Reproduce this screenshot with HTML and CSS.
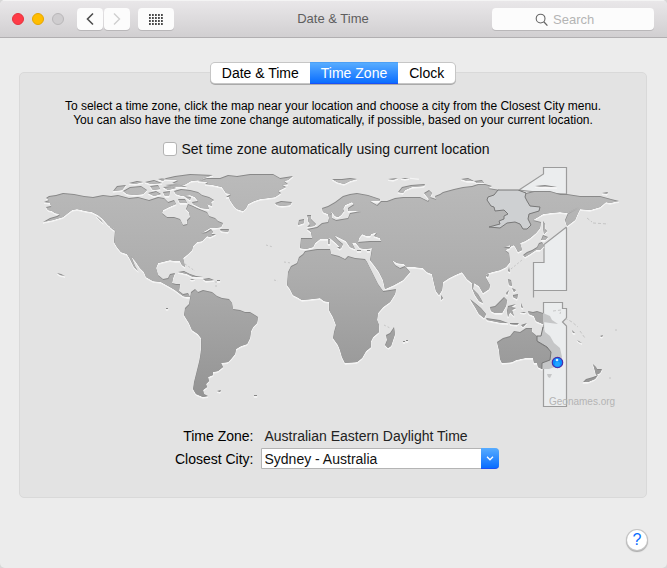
FILE: index.html
```html
<!DOCTYPE html>
<html lang="en">
<head>
<meta charset="utf-8">
<title>Date &amp; Time</title>
<link rel="stylesheet" href="styles.css">
</head>
<body>
<div class="window">
  <header class="titlebar">
    <div class="controls">
      <div class="lights">
        <button class="light close" aria-label="Close"></button>
        <button class="light minimize" aria-label="Minimize"></button>
        <button class="light zoom" aria-label="Zoom" disabled></button>
      </div>
      <div class="history">
        <button class="tool" aria-label="Back"><svg width="8" height="14" viewBox="0 0 8 14"><path d="M7 1.5 1.5 7 7 12.5" fill="none" stroke="#4d4d4d" stroke-width="1.6"/></svg></button>
        <button class="tool" aria-label="Forward" disabled><svg width="8" height="14" viewBox="0 0 8 14"><path d="M1 1.5 6.5 7 1 12.5" fill="none" stroke="#cfcfcf" stroke-width="1.4"/></svg></button>
      </div>
      <button class="tool wide" aria-label="Show all"><svg width="14" height="11" viewBox="0 0 14 11"><path d="M0 1h14M0 4h14M0 7h14M0 10h14" stroke="#111" stroke-width="1.700" stroke-dasharray="1.800 1.200"/></svg></button>
    </div>
    <h1>Date &amp; Time</h1>
    <div class="search">
      <svg width="14" height="14" viewBox="0 0 14 14" aria-hidden="true"><circle cx="5.6" cy="5.6" r="4.4" fill="none" stroke="#666" stroke-width="1.1"/><path d="m8.8 8.8 3.6 3.8" stroke="#666" stroke-width="1.3"/></svg>
      <input type="search" placeholder="Search" aria-label="Search">
    </div>
  </header>

  <main>
    <section class="panel">
      <nav class="tabs">
        <button>Date &amp; Time</button>
        <button class="active" aria-current="page">Time Zone</button>
        <button>Clock</button>
      </nav>
      <p class="hint">To select a time zone, click the map near your location and choose a city from the Closest City menu.<br>You can also have the time zone change automatically, if possible, based on your current location.</p>
      <label class="auto"><input type="checkbox"> Set time zone automatically using current location</label>

      <svg class="map" viewBox="40 162 586 250" role="img" aria-label="World map">
        <defs>
          <linearGradient id="shade" gradientUnits="userSpaceOnUse" x1="0" y1="170" x2="0" y2="400">
            <stop offset="0" stop-color="#bbb"/><stop offset=".45" stop-color="#adadad"/><stop offset="1" stop-color="#939393"/>
          </linearGradient>
          <path id="land" fill-rule="evenodd" d="
            M46 198 49 196 56 195 63 193 74 194 84 196 93 197 103 195 111 196 118 195 129 198 138 197 149 200 158 197 164 198 168 202 174 200 176 204 169 207 163 210 162 213 167 217 174 217 180 219 183 225 187 224 187 220 190 217 189 212 186 209 188 204 193 206 197 208 202 210 207 212 209 216 215 218 218 221 223 223 221 227 215 228 210 228 205 231 201 233 206 232 211 229 213 232 211 234 216 234 210 237 207 236 202 241 197 242 193 246 192 250 188 254 183 258 184 262 185 267 182 265 180 261 175 261 170 260 162 262 158 263 156 268 158 275 163 279 168 278 170 274 175 273 173 278 172 283 176 284 180 284 179 291 183 294 188 293 190 297 187 297 183 296 175 290 170 287 161 282 153 281 146 277 144 272 140 268 136 262 131 256 135 266 138 271 134 267 130 259 127 254 121 252 117 247 114 242 115 230 108 225 103 219 98 215 92 212 86 211 77 209 72 210 68 213 63 217 53 220 43 222 50 218 57 216 60 214 55 213 52 211 48 210 46 207 51 206 50 203 44 202 49 200Z
            M103 223 99 219 96 216 101 220ZM115 231 110 227 113 227Z
            M198 181 206 178 220 178 228 175 237 176 250 174 273 174 280 178 293 176 288 180 284 181 288 184 282 185 286 187 278 191 281 193 275 197 268 198 260 199 254 201 248 204 246 208 243 211 237 209 234 206 230 200 229 197 226 197 231 194 226 193 224 190 222 187 213 185 205 184 208 182Z
            M174 191 181 189 190 190 198 192 202 195 209 197 214 200 211 202 212 206 207 204 209 209 201 208 193 204 192 202 198 201 195 197 190 195 182 196 176 194Z
            M162 179 175 176 190 174 213 175 204 178 200 180 191 181 184 185 172 183 178 180Z
            M113 191 117 186 126 185 122 190ZM123 191 130 187 141 186 147 190 143 194 134 195 127 194ZM150 186 158 185 160 189 153 190ZM148 193 156 191 161 194 154 196ZM163 187 171 186 176 188 168 190ZM163 192 170 191 169 196 165 196ZM129 183 137 181 143 182 135 184ZM145 182 154 180 162 183 151 184ZM158 179 166 178 163 181ZM165 185 178 184 187 187 176 187ZM178 199 185 199 187 203 180 203ZM184 196 191 197 190 200ZM220 229 229 229 228 232 221 231Z
            M178 272 184 271 190 274 196 276 203 277 193 277 187 274ZM203 279 209 278 214 280 206 281ZM190 279 195 279 192 280ZM217 280h3v1h-3Z
            M275 203 281 201 292 202 290 205 282 206 277 205Z
            M191 292 195 289 198 292 203 290 212 292 217 296 222 298 229 299 232 303 233 309 240 310 245 312 250 312 255 315 258 317 257 323 253 327 251 331 250 338 247 344 241 346 236 349 235 354 231 359 228 362 221 363 223 367 218 371 213 372 213 375 208 377 209 381 206 384 207 387 203 390 204 394 208 396 203 397 196 394 193 389 194 382 197 370 199 362 200 357 201 350 201 338 198 334 192 330 189 323 184 315 185 308 189 304 190 298Z
            M217 391 221 390 220 392ZM254 395h3v1h-3ZM57 273 61 274 65 276 60 275ZM166 308h2v1h-2Z
            M300 248 301 238 312 238 311 232 307 229 317 227 322 223 328 222 329 218 328 214 332 213 332 218 336 220 342 219 348 218 350 213 361 211 348 211 348 208 354 204 352 202 345 205 343 209 344 211 341 215 338 217 335 216 332 212 328 214 323 212 322 208 328 206 335 202 343 196 350 194 357 193 368 195 380 199 380 201 370 201 377 205 381 201 387 201 395 198 403 197 409 197 420 197 428 201 429 199 424 193 429 190 432 193 430 197 436 199 435 196 440 194 443 192 454 189 463 187 472 186 478 184 485 184 492 186 488 188 500 190 518 190 526 193 534 191 550 191 560 194 567 194 580 196 588 196 600 196 611 199 619 201 614 202 610 203 606 202 600 207 590 210 580 209 578 213 575 220 567 226 565 220 568 213 579 207 567 213 560 212 550 213 543 214 538 217 533 220 541 222 540 228 536 233 530 238 525 241 520 243 522 250 518 252 516 248 514 245 509 247 503 247 510 244 510 248 505 250 509 253 510 262 506 267 500 270 492 272 486 274 486 278 490 285 489 289 483 293 479 286 474 283 473 289 478 294 481 299 483 303 479 301 475 295 472 288 472 283 467 279 465 276 462 272 455 275 449 278 443 282 442 290 439 295 436 291 434 283 432 274 427 272 423 268 415 267 407 267 404 264 397 263 392 260 395 265 400 268 405 266 410 272 403 280 394 285 385 289 383 280 379 272 374 265 370 260 372 248 365 249 360 248 356 243 352 243 355 249 350 247 346 241 338 237 334 235 338 240 343 244 341 248 336 243 330 238 327 239 320 239 315 243 313 247 306 249Z
            M358 242 370 241 381 241 380 238 374 236 377 232 371 234 370 236 367 236 362 234 359 238Z
            M305 251 311 250 317 249 330 249 331 254 339 256 345 259 348 256 355 258 365 259 367 262 370 268 374 276 378 284 383 291 390 290 396 289 395 294 390 302 383 307 378 313 377 320 379 325 379 332 373 337 371 341 371 347 366 351 362 358 357 362 345 363 342 357 340 350 338 345 333 338 334 332 336 325 333 317 329 310 329 302 324 301 320 298 312 299 302 300 297 297 293 295 290 289 287 285 288 272 291 266 297 263 299 257 303 254Z
            M394 327 390 333 386 335 387 340 385 345 388 348 391 346 395 334Z
            M307 215 311 215 311 219 314 222 316 224 314 226 307 227 310 224 308 221 308 218ZM299 220 304 219 304 223 298 225ZM328 239h2v5h-2ZM337 247 341 247 340 249ZM357 250h4v1h-4ZM367 250h3v1h-3Z
            M332 179 342 179 350 178 357 179 350 181 344 184 337 182ZM398 192 402 187 411 185 425 184 424 186 412 187 405 190 403 193ZM388 179 398 178 393 180ZM401 178 409 178 405 179ZM410 177 419 178ZM461 179 468 178 474 181 467 181ZM474 181 482 180 484 183 477 183ZM535 186 545 185 557 187 542 187ZM602 193 608 192 607 194Z
            M542 242 544 246 540 250 536 250 530 254 525 257 523 255 527 252 532 250 537 247 539 243ZM541 240 543 235 548 237 545 240ZM543 221 545 224 545 229 547 231 544 234 543 228ZM509 267 510 272 508 271ZM485 275 489 274 488 277ZM441 295 443 298 441 300Z
            M508 279 511 280 512 286 509 285ZM512 288 516 290 514 292ZM513 295 518 294 517 299 513 297ZM506 293 509 290 507 295Z
            M470 299 475 303 481 308 486 314 484 318 479 314 475 307ZM486 318 493 319 500 320 508 323 502 323 487 320ZM510 323 519 323 517 325 510 324ZM521 325 527 323 523 327Z
            M490 307 495 306 500 301 504 297 507 300 506 306 502 313 495 313 491 311ZM508 306 516 304 511 307 516 308 512 310 514 316 510 312 508 317 507 311ZM521 303 523 308 521 307ZM520 312 526 312 524 313Z
            M528 311 533 312 537 311 543 313 543 324 536 321 534 316 529 314Z
            M497 342 503 338 510 336 514 331 520 332 526 328 532 328 532 332 537 336 537 341 547 347 551 352 550 360 542 363 542 369 538 367 537 363 534 363 533 358 525 358 516 360 512 362 502 363 500 359 499 350Z
            M593 364 596 367 597 369 602 369 600 373 596 375 595 371ZM598 375 595 379 588 382 583 382 586 379 593 377ZM577 340 582 343 579 342ZM572 330 575 333 573 333ZM600 336 603 335 602 337ZM403 341h2v1h-2ZM406 340h2v1h-2Z"/>
          <clipPath id="coast"><use href="#land"/></clipPath>
        </defs>
        <g fill="#ebedee" stroke="#9c9c9c" stroke-width="1.2">
          <path d="M519 190 543.500 174V167.500H566.500V194L545 193Z"/>
          <path d="M566.500 227 544 244.500V262.500H533.500V297.500V290.500H566.500Z"/>
          <path d="M543.500 302.500H562.500V308.500H566.500V318L562.500 322 566.500 326V406.500H543.500Z"/>
        </g>
        <use href="#land" fill="#f8f8f8" stroke="#f5f5f5" stroke-width=".8" transform="translate(0 1.300)"/>
        <use href="#land" fill="#858585"/>
        <g clip-path="url(#coast)"><use href="#land" fill="url(#shade)" stroke="url(#shade)" stroke-width=".2" transform="translate(.3 1.100)"/></g>
        <path d="M487 200 488 197 494 195 498 190 518 190 526 193 525 197 527 201 530 206 540 207 539 211 529 214 528 219 531 225 527 229 523 229 520 224 515 222 507 223 500 228 489 227 500 224 499 221 504 219 504 216 508 214 504 210 495 211 494 207 491 206Z" fill="#ced0d2" stroke="#777" stroke-linejoin="round"/>
        <path d="M543 326 545 332 550 336 554 343 560 348 562 357 558 366 549 369 543 369 542 363 550 360 551 352 547 347 537 341 537 336 541 336ZM543 313 550 316 552 320 558 324 550 323 543 322ZM547 374 552 374 550 378 548 377Z" fill="#c5c6c7"/>
        <path d="M543 327 541 336 537 336V341L547 347 551 352 550 360 542 363V369" fill="none" stroke="#747474"/>
        <g fill="none" stroke="#bcbcbc" stroke-width=".8">
          <path d="M553 311 561 310 560 314M565 318 572 322 578 327M580 331 585 338M587 218 592 222M593 223 608 224" stroke-dasharray="3 2"/>
          <path d="M266 245 273 247M185 264 195 271M216 281V289M511 269 522 260M384 325 390 328M284 262 291 263M274 280 278 281M609 378h2M615 330h2" stroke-dasharray="2 2"/>
        </g>
        <text x="549" y="405">Geonames.org</text>
        <circle cx="557.500" cy="362.500" r="5.200" fill="#0a8cff" stroke="#4b2fa8" stroke-width="1.200"/>
        <circle cx="557.500" cy="364" r="2.600" fill="#20a5ff"/><circle cx="557" cy="360" r="1.300" fill="#d5efff"/>
      </svg>

      <form class="details">
        <span class="name">Time Zone:</span>
        <output class="value">Australian Eastern Daylight Time</output>
        <label class="name" for="city">Closest City:</label>
        <div class="combo">
          <select id="city"><option>Sydney - Australia</option></select>
          <span class="arrow" aria-hidden="true"><svg width="8" height="5" viewBox="0 0 8 5"><path d="m1 .8 3 3 3-3" fill="none" stroke="#fff" stroke-width="1.300"/></svg></span>
        </div>
      </form>
    </section>
    <footer><button class="help" aria-label="Help">?</button></footer>
  </main>
</div>
</body>
</html>
```

FILE: styles.css
```css
* { box-sizing: border-box; }

body {
  margin: 0;
  background: #d8d8d8;
  color: #111;
  font: 14px/20px "Liberation Sans", Arial, sans-serif;
}

button, input, select { font: inherit; color: inherit; margin: 0; }
button { border: 0; padding: 0; }

.window {
  min-height: 100vh;
  background: #ececec;
  border-radius: 5px;
  overflow: hidden;
}

.titlebar {
  display: grid;
  grid-template-columns: 1fr auto 1fr;
  align-items: center;
  height: 38px;
  padding: 0 13px 0 12px;
  background: linear-gradient(#e9e7e9, #d1cfd1);
  border-top: 1px solid #f4f4f4;
  border-bottom: 1px solid #b1afb1;
}

.titlebar h1 {
  margin: 0;
  color: #5e5e5e;
  font-size: 13px;
  line-height: 22px;
  font-weight: 400;
}

.controls, .lights, .history { display: flex; align-items: center; }
.controls { gap: 8px; }
.lights { gap: 8px; margin-right: 5px; }
.history { gap: 1px; }

.light { width: 12px; height: 12px; border-radius: 50%; border: 1px solid; }
.close { background: #ff3b47; border-color: #e5323d; }
.minimize { background: #ffbd00; border-color: #e5a500; }
.zoom { background: #cfcdcf; border-color: #b9b7b9; }

.tool {
  display: grid;
  place-items: center;
  width: 26px;
  height: 22px;
  background: #fcfcfc;
  border-radius: 4px;
  box-shadow: 0 1px 0 #b9b7b9;
}
.tool.wide { width: 36px; }

.search { position: relative; justify-self: end; width: 162px; }
.search svg { position: absolute; left: 43px; top: 5px; }
.search input {
  display: block;
  width: 100%;
  height: 22px;
  padding: 0 4px 0 61px;
  border: 0;
  border-radius: 4px;
  background: #fcfcfc;
  box-shadow: 0 1px 0 #b9b7b9;
  font-size: 13px;
  appearance: none;
}
.search input::placeholder { color: #b4b4b4; }

main { padding: 34px 20px 17px 19px; }

.panel {
  padding-bottom: 28px;
  background: #e3e3e3;
  border: 1px solid #d9d9d9;
  border-radius: 5px;
}

.tabs {
  display: flex;
  width: max-content;
  height: 20px;
  margin: -10px auto 0;
  border-radius: 4px;
  background: #fff;
  box-shadow: 0 0 0 1px #c6c6c6, 0 1px 0 1px #aaa;
}
.tabs button { padding: 0 11px; background: none; color: #000; }
.tabs .active {
  background: linear-gradient(#57acff, #0a6dff);
  box-shadow: 0 -1px 0 #4b9ff5, 0 1px 0 #1a50f5;
  color: #fff;
}

.hint {
  margin: 16px 0 12px;
  color: #000;
  font-size: 12px;
  line-height: 14px;
  text-align: center;
}

.auto {
  display: flex;
  justify-content: center;
  align-items: center;
  gap: 4px;
  height: 20px;
  margin-right: 13px;
}
.auto input {
  appearance: none;
  width: 14px;
  height: 14px;
  background: #fff;
  border: 1px solid #b4b4b4;
  border-radius: 3px;
}
.auto input:checked { background: #1a7dff; }

.map { display: block; width: 100%; padding: 0 20px; margin: 3px 0 14px; }
.map text { fill: #b4b4b4; font-size: 10px; }

.details {
  display: grid;
  grid-template-columns: 86px 238px;
  justify-content: center;
  align-items: center;
  gap: 2px 7px;
}
.name { text-align: right; color: #000; }
.value { padding-left: 4px; color: #222; }

.combo { position: relative; display: flex; }
.combo select {
  width: 100%;
  height: 21px;
  padding: 0 22px 0 3px;
  background: #fff;
  border: 1px solid #b4b4b4;
  border-radius: 0 4px 4px 0;
  appearance: none;
}
.arrow {
  position: absolute;
  inset: 0 0 0 auto;
  display: grid;
  place-items: center;
  width: 18px;
  background: linear-gradient(#57acff, #0a6dff);
  border-bottom: 1px solid #1a50f5;
  border-radius: 0 4px 4px 0;
  pointer-events: none;
}

footer { display: flex; justify-content: flex-end; margin-top: 32px; }
.help {
  width: 20px;
  height: 20px;
  border-radius: 50%;
  background: #fff;
  box-shadow: 0 0 0 1px #c4c4c4, 0 1px 1px 1px #aaa;
  color: #0a6dff;
  font-size: 16px;
}
```
